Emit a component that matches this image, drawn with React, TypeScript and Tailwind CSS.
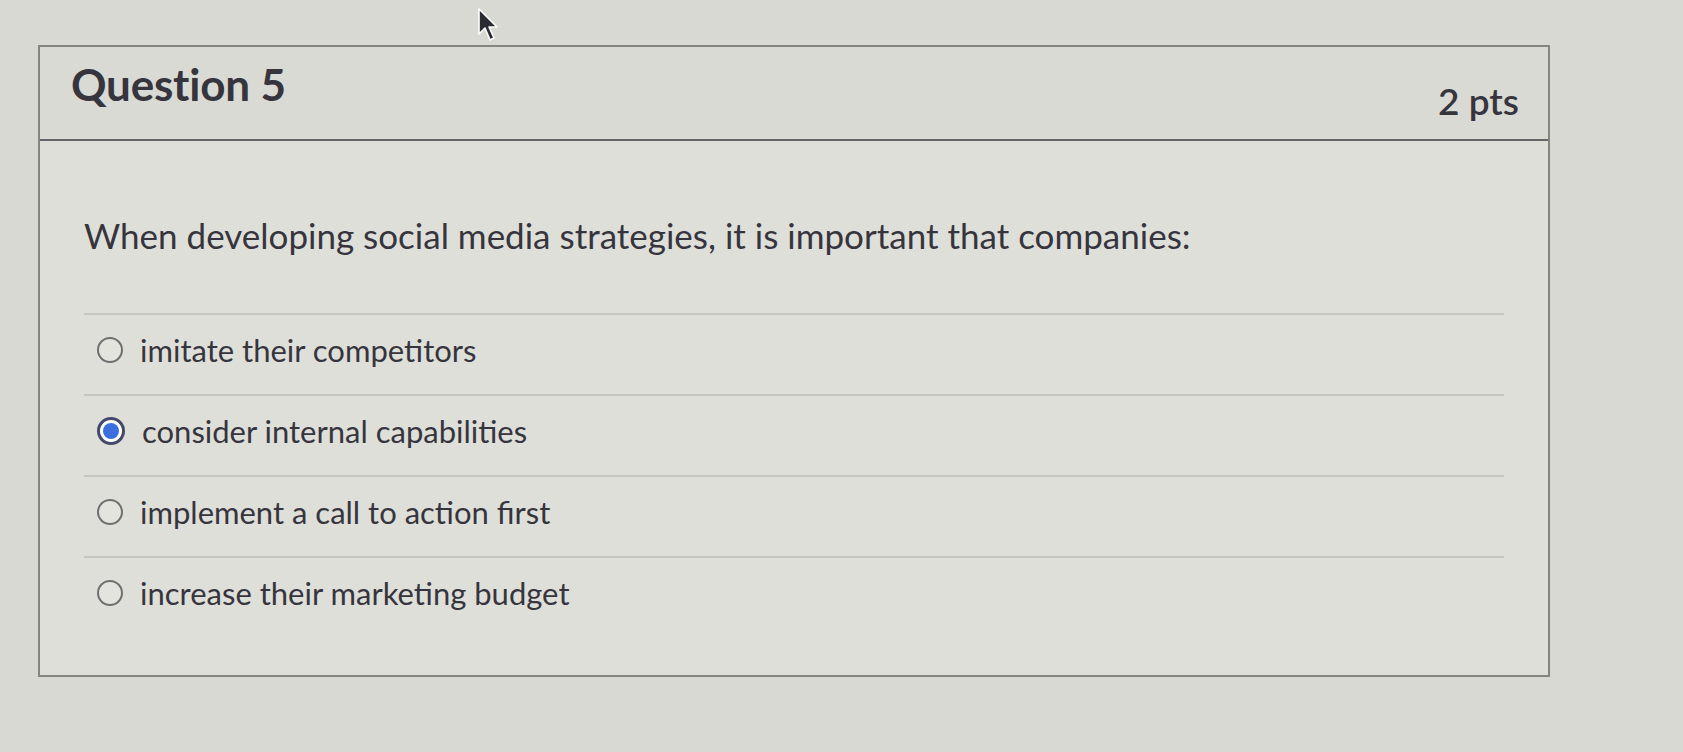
import React from "react";

const OPTIONS = [
  { id: "a", label: "imitate their competitors", checked: false },
  { id: "b", label: "consider internal capabilities", checked: true },
  { id: "c", label: "implement a call to action first", checked: false },
  { id: "d", label: "increase their marketing budget", checked: false },
];

function Radio({ checked }: { checked: boolean }) {
  if (checked) {
    return (
      <span className="flex h-[28px] w-[28px] shrink-0 items-center justify-center rounded-full border-[3px] border-[#44496a] bg-white">
        <span className="h-[16px] w-[16px] rounded-full bg-[#3b6fe0]" />
      </span>
    );
  }
  return <span className="h-[26px] w-[26px] shrink-0 rounded-full border-2 border-[#6f6f6f] bg-[#e4e4de]" />;
}

function Cursor() {
  return (
    <svg className="absolute left-[477px] top-[7px]" width="22" height="37" viewBox="0 0 22 37">
      <path
        d="M2 2 L2 27 L8 21 L13 33 L17 31 L12 20 L20 20 Z"
        fill="#2b2b33"
        stroke="#ffffff"
        strokeWidth="1.6"
        strokeLinejoin="round"
      />
    </svg>
  );
}

export default function App() {
  return (
    <div className="relative h-[752px] w-full overflow-hidden bg-[#d9d9d3] pl-[38px] pt-[45px] font-['Lato','Liberation_Sans',sans-serif] text-[#36353e]">
      <Cursor />
      <div className="w-[1512px] border-2 border-[#85857f] bg-[#dfdfd9]">
        <div className="flex h-[94px] items-center justify-between border-b-2 border-[#66666a] bg-[#dadad4] pl-[31px] pr-[29px]">
          <h2 className="mb-[18px] text-[44px] font-bold leading-none tracking-[-0.2px]">Question 5</h2>
          <span className="pt-[14px] text-[37px] font-semibold leading-none">2 pts</span>
        </div>
        <div className="px-[44px] pb-[38px] pt-[74px]">
          <p className="text-[35px] leading-[40px]">
            When developing social media strategies, it is important that companies:
          </p>
          <div className="mt-[58px]">
            {OPTIONS.map((o) => (
              <label
                key={o.id}
                className="flex items-center gap-[17px] border-t-2 border-[#c6c6c0] pb-[24px] pl-[13px] pt-[15px]"
              >
                <Radio checked={o.checked} />
                <span className="text-[31px] leading-[40px]">{o.label}</span>
              </label>
            ))}
          </div>
        </div>
      </div>
    </div>
  );
}
